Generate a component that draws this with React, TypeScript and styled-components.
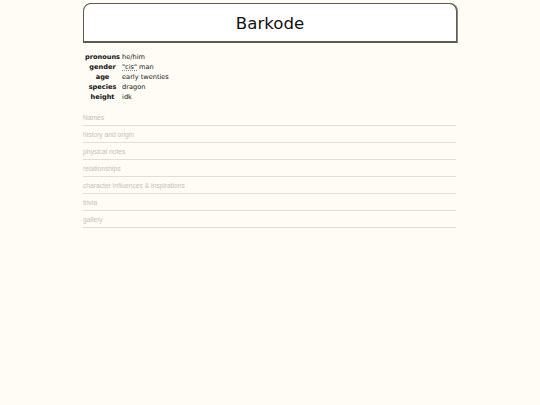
import styled, { createGlobalStyle } from "styled-components";

const GlobalStyle = createGlobalStyle`
  html, body {
    margin: 0;
    background: #fffcf5;
  }
`;

const Page = styled.div`
  width: 374px;
  margin: 0 auto;
  padding-top: 3px;
  font-family: "DejaVu Sans", Verdana, sans-serif;
`;

const Header = styled.header`
  height: 37px;
  display: flex;
  align-items: center;
  justify-content: center;
  background: #ffffff;
  border: 1px solid #5a5a50;
  border-bottom-width: 2px;
  border-radius: 8px 8px 0 0;
  box-shadow: 1px 0 0 #8a8a80;
`;

const Title = styled.h1`
  margin: 2px 0 0;
  font-size: 16.6px;
  font-weight: normal;
  color: #111;
`;

const Info = styled.table`
  margin: 9px 0 7px 1px;
  border-collapse: collapse;
  font-size: 6.6px;
  color: #111;
`;

const Label = styled.th`
  padding: 0 1px 0 1px;
  height: 10px;
  text-align: center;
  font-weight: bold;
`;

const Value = styled.td`
  padding: 0 0 0 1px;
  height: 10px;
`;

const Abbr = styled.abbr`
  text-decoration: underline dotted #888;
`;

const Section = styled.div`
  height: 16px;
  display: flex;
  align-items: center;
  margin-right: 1px;
  border-bottom: 1px solid #e2ded4;
  font-family: "Liberation Sans", Arial, sans-serif;
  font-size: 6.7px;
  color: #c4c1ba;
`;

const info: [string, React.ReactNode][] = [
  ["pronouns", "he/him"],
  [
    "gender",
    <>
      <Abbr title="cisgender">"cis"</Abbr> man
    </>,
  ],
  ["age", "early twenties"],
  ["species", "dragon"],
  ["height", "idk"],
];

const sections = [
  "Names",
  "history and origin",
  "physical notes",
  "relationships",
  "character influences & inspirations",
  "trivia",
  "gallery",
];

export default function App() {
  return (
    <>
      <GlobalStyle />
      <Page>
        <Header>
          <Title>Barkode</Title>
        </Header>
        <Info>
          <tbody>
            {info.map(([k, v]) => (
              <tr key={k}>
                <Label>{k}</Label>
                <Value>{v}</Value>
              </tr>
            ))}
          </tbody>
        </Info>
        {sections.map((s) => (
          <Section key={s}>{s}</Section>
        ))}
      </Page>
    </>
  );
}
